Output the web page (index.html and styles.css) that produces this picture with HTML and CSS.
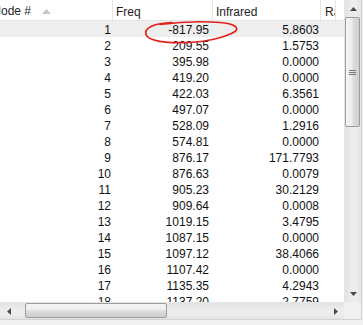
FILE: index.html
```html
<!DOCTYPE html>
<html>
<head>
<meta charset="utf-8">
<link rel="stylesheet" href="styles.css">
</head>
<body>
<div class="window">
  <div class="listview">
    <div class="viewport">
      <div class="table">
        <div class="row head">
          <div class="cell c1"><span>Mode #</span><svg class="sort" width="9" height="5" viewBox="0 0 9 5"><path d="M0 5 L4.5 0 L9 5Z" fill="#c3c6cc"/></svg></div>
          <div class="cell c2">Freq</div>
          <div class="cell c3">Infrared</div>
          <div class="cell c4">Raman</div>
          <div class="cell c5"></div>
        </div>
        <div class="row sel"><div class="cell c1">1</div><div class="cell c2">-817.95</div><div class="cell c3">5.8603</div><div class="cell c4"></div><div class="cell c5"></div></div>
        <div class="row"><div class="cell c1">2</div><div class="cell c2">209.55</div><div class="cell c3">1.5753</div><div class="cell c4"></div><div class="cell c5"></div></div>
        <div class="row"><div class="cell c1">3</div><div class="cell c2">395.98</div><div class="cell c3">0.0000</div><div class="cell c4"></div><div class="cell c5"></div></div>
        <div class="row"><div class="cell c1">4</div><div class="cell c2">419.20</div><div class="cell c3">0.0000</div><div class="cell c4"></div><div class="cell c5"></div></div>
        <div class="row"><div class="cell c1">5</div><div class="cell c2">422.03</div><div class="cell c3">6.3561</div><div class="cell c4"></div><div class="cell c5"></div></div>
        <div class="row"><div class="cell c1">6</div><div class="cell c2">497.07</div><div class="cell c3">0.0000</div><div class="cell c4"></div><div class="cell c5"></div></div>
        <div class="row"><div class="cell c1">7</div><div class="cell c2">528.09</div><div class="cell c3">1.2916</div><div class="cell c4"></div><div class="cell c5"></div></div>
        <div class="row"><div class="cell c1">8</div><div class="cell c2">574.81</div><div class="cell c3">0.0000</div><div class="cell c4"></div><div class="cell c5"></div></div>
        <div class="row"><div class="cell c1">9</div><div class="cell c2">876.17</div><div class="cell c3">171.7793</div><div class="cell c4"></div><div class="cell c5"></div></div>
        <div class="row"><div class="cell c1">10</div><div class="cell c2">876.63</div><div class="cell c3">0.0079</div><div class="cell c4"></div><div class="cell c5"></div></div>
        <div class="row"><div class="cell c1">11</div><div class="cell c2">905.23</div><div class="cell c3">30.2129</div><div class="cell c4"></div><div class="cell c5"></div></div>
        <div class="row"><div class="cell c1">12</div><div class="cell c2">909.64</div><div class="cell c3">0.0008</div><div class="cell c4"></div><div class="cell c5"></div></div>
        <div class="row"><div class="cell c1">13</div><div class="cell c2">1019.15</div><div class="cell c3">3.4795</div><div class="cell c4"></div><div class="cell c5"></div></div>
        <div class="row"><div class="cell c1">14</div><div class="cell c2">1087.15</div><div class="cell c3">0.0000</div><div class="cell c4"></div><div class="cell c5"></div></div>
        <div class="row"><div class="cell c1">15</div><div class="cell c2">1097.12</div><div class="cell c3">38.4066</div><div class="cell c4"></div><div class="cell c5"></div></div>
        <div class="row"><div class="cell c1">16</div><div class="cell c2">1107.42</div><div class="cell c3">0.0000</div><div class="cell c4"></div><div class="cell c5"></div></div>
        <div class="row"><div class="cell c1">17</div><div class="cell c2">1135.35</div><div class="cell c3">4.2943</div><div class="cell c4"></div><div class="cell c5"></div></div>
        <div class="row"><div class="cell c1">18</div><div class="cell c2">1137.20</div><div class="cell c3">2.7759</div><div class="cell c4"></div><div class="cell c5"></div></div>
      </div>
      <svg class="mark" width="344" height="302" viewBox="0 0 344 302">
        <path d="M172 22.5 C154 23 144 28 146 34.5 C148 41 166 43.5 188 42.5 C210 41.5 227 36.5 235 31.5 C240 28 234 23.5 220 22.5 C204 21.3 184 21.3 160 24.5" fill="none" stroke="#e3211c" stroke-width="1.7" stroke-linecap="round"/>
      </svg>
    </div>
    <div class="vscroll">
      <div class="btn"><svg width="7" height="4" viewBox="0 0 7 4"><path d="M0 4 L3.5 0 L7 4Z" fill="#4a4a4a"/></svg></div>
      <div class="vtrack">
        <div class="vthumb"><svg width="7" height="7" viewBox="0 0 7 7"><path d="M0 1.5H7M0 3.5H7M0 5.5H7" stroke="#7a7a7a" stroke-width="1"/></svg></div>
      </div>
      <div class="btn"><svg width="7" height="4" viewBox="0 0 7 4"><path d="M0 0 L3.5 4 L7 0Z" fill="#4a4a4a"/></svg></div>
    </div>
    <div class="hscroll">
      <div class="btn"><svg width="4" height="7" viewBox="0 0 4 7"><path d="M4 0 L0 3.5 L4 7Z" fill="#4a4a4a"/></svg></div>
      <div class="htrack"><div class="hthumb"></div></div>
      <div class="btn"><svg width="4" height="7" viewBox="0 0 4 7"><path d="M0 0 L4 3.5 L0 7Z" fill="#4a4a4a"/></svg></div>
    </div>
    <div class="corner"></div>
  </div>
</div>
</body>
</html>
```
FILE: styles.css
```css
* { box-sizing: border-box; }
body {
  margin: 0;
  font-family: "Liberation Sans", Arial, sans-serif;
  font-size: 12px;
  color: #111;
}
.window {
  width: 363px;
  height: 325px;
  background: #f0f0f0;
  overflow: hidden;
}
.listview {
  display: grid;
  grid-template-columns: 344px 17px;
  grid-template-rows: 302px 17px;
  width: 362px;
  border-right: 1px solid #d4d4d4;
  border-bottom: 1px solid #d4d4d4;
  background: #fff;
}
.viewport {
  position: relative;
  overflow: hidden;
}
.table {
  margin-left: -13px;
  width: 400px;
}
.row {
  display: grid;
  grid-template-columns: 126px 100px 108px 15px 1fr;
  height: 16px;
  line-height: 16px;
  padding-top: 1px;
}
.row.sel { background: #eeeeee; }
.cell {
  white-space: nowrap;
  overflow: hidden;
  text-align: right;
}
.row .c1 { padding-right: 2px; }
.row .c2 { padding-right: 4px; }
.row .c3 { padding-right: 2px; }
.row.head {
  height: 21px;
  line-height: 20px;
  padding-top: 0;
  border-bottom: 1px solid #e5e5e5;
  background: #fff;
}
.row.head .cell {
  text-align: left;
  padding: 2px 0 0 3px;
  border-right: 1px solid #e5e5e5;
  color: #1e1e1e;
}
.row.head .c4 {
  padding-left: 4px;
  text-overflow: clip;
}
.row.head .c5 { border-right: none; }
.row.head .c1 {
  padding-left: 4px;
  display: flex;
  align-items: center;
}
.sort {
  margin-left: 11px;
  margin-top: 1px;
}
.mark {
  position: absolute;
  left: 0;
  top: 0;
  pointer-events: none;
}
.vscroll {
  display: flex;
  flex-direction: column;
  background: linear-gradient(to right, #e2e2e2, #ededed 40%, #ededed 70%, #e4e4e4);
  border-left: 1px solid #e6e6e6;
}
.btn {
  flex: 0 0 17px;
  display: flex;
  align-items: center;
  justify-content: center;
}
.vtrack {
  flex: 1;
  padding: 0 1px 0 0;
}
.vthumb {
  height: 110px;
  border: 1px solid #9c9c9c;
  border-radius: 2px;
  background: linear-gradient(to right, #f6f6f6, #ececec 45%, #dcdcdc 55%, #cfcfcf);
  display: flex;
  align-items: center;
  justify-content: center;
}
.hscroll {
  display: flex;
  background: linear-gradient(to bottom, #e2e2e2, #ededed 40%, #ededed 70%, #e4e4e4);
  border-top: 1px solid #e6e6e6;
}
.hscroll .btn { width: 17px; }
.htrack {
  flex: 1;
  padding: 0 0 1px 8px;
}
.hthumb {
  width: 142px;
  height: 100%;
  border: 1px solid #9c9c9c;
  border-radius: 2px;
  background: linear-gradient(to bottom, #f6f6f6, #ececec 45%, #dcdcdc 55%, #cfcfcf);
}
.corner {
  background: #f0f0f0;
}
```
